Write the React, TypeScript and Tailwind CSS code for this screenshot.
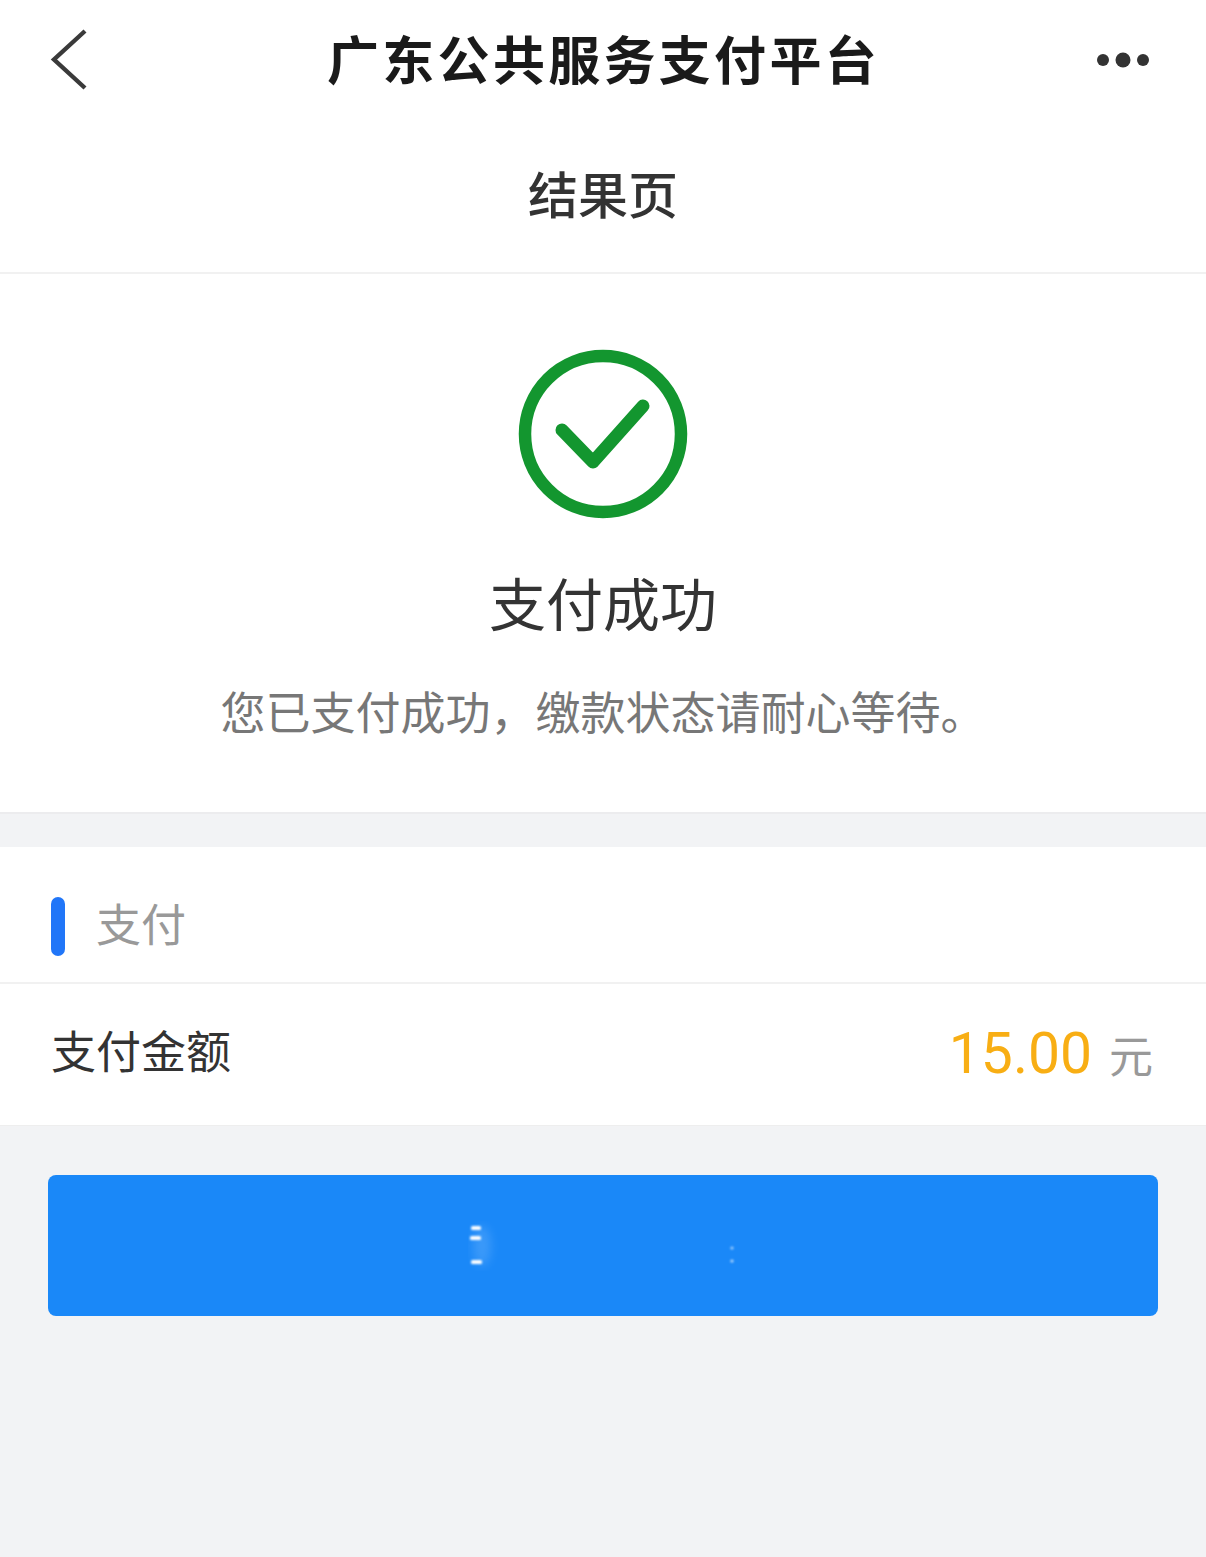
const cjk = "font-['Noto_Sans_CJK_SC','Noto_Sans',sans-serif]";

function BackIcon() {
  return (
    <svg width="40" height="62" viewBox="0 0 40 62" fill="none" className="text-[#3a3a3a]">
      <path d="M35 2 L4 30.5 L35 59" stroke="currentColor" strokeWidth="4.4" />
    </svg>
  );
}

function MoreIcon() {
  return (
    <svg width="54" height="16" viewBox="0 0 54 16" className="text-[#333]">
      <circle cx="7" cy="8" r="6" fill="currentColor" />
      <circle cx="27" cy="8" r="7.5" fill="currentColor" />
      <circle cx="47" cy="8" r="6" fill="currentColor" />
    </svg>
  );
}

function SuccessIcon() {
  return (
    <svg width="170" height="170" viewBox="0 0 170 170" fill="none" className="text-[#13962f]">
      <circle cx="85" cy="85" r="78" stroke="currentColor" strokeWidth="12.5" />
      <path
        d="M44 81 L75 113 L125 57"
        stroke="currentColor"
        strokeWidth="13"
        strokeLinecap="round"
        strokeLinejoin="round"
      />
    </svg>
  );
}

// the label on the button is smudged out in the picture, only a few marks remain
function ButtonSmudge() {
  return (
    <svg width="270" height="50" viewBox="0 0 270 50" fill="none">
      <defs>
        <filter id="smudge" x="-50%" y="-100%" width="200%" height="300%">
          <feGaussianBlur stdDeviation="0.9" />
        </filter>
        <filter id="smudge-wide" x="-50%" y="-50%" width="200%" height="200%">
          <feGaussianBlur stdDeviation="5" />
        </filter>
      </defs>
      <ellipse cx="14" cy="25" rx="9" ry="20" fill="#ffffff" opacity="0.14" filter="url(#smudge-wide)" />
      <rect x="3" y="5" width="10" height="4" rx="1.5" fill="#ffffff" filter="url(#smudge)" />
      <rect x="2" y="15" width="11" height="4" rx="1.5" fill="#ffffff" filter="url(#smudge)" />
      <rect x="3" y="39" width="11" height="4" rx="1.5" fill="#ffffff" filter="url(#smudge)" />
      <circle cx="264" cy="27" r="1.6" fill="#ffffff" opacity="0.6" filter="url(#smudge)" />
      <circle cx="264" cy="40" r="1.6" fill="#ffffff" opacity="0.7" filter="url(#smudge)" />
    </svg>
  );
}

export default function App() {
  return (
    <div className={`${cjk} flex h-[1557px] w-[1206px] flex-col overflow-hidden bg-[#f2f3f5]`}>
      <header className="h-[274px] border-b-2 border-[#f1f1f1] bg-white">
        <div className="flex h-[120px] items-center pl-[50px] pr-[56px]">
          <div className="flex-1">
            <BackIcon />
          </div>
          <h1 className="mb-[4px] ml-[7px] text-[52px] font-semibold leading-none tracking-[3.3px] text-[#1a1a1a]">
            广东公共服务支付平台
          </h1>
          <div className="flex flex-1 justify-end">
            <MoreIcon />
          </div>
        </div>
        <h2 className="mt-[36px] text-center text-[50px] font-medium leading-[72px] text-[#333]">结果页</h2>
      </header>

      <section className="flex h-[540px] flex-col items-center border-b-2 border-[#ececee] bg-white pt-[75px]">
        <SuccessIcon />
        <p className="mt-[42px] text-[57px] leading-[80px] text-[#333]">支付成功</p>
        <p className="mt-[38px] text-[45px] leading-[64px] text-[#777]">您已支付成功，缴款状态请耐心等待。</p>
      </section>

      <section className="mt-[33px] bg-white">
        <div className="flex h-[137px] items-center gap-[31px] border-b-2 border-[#f1f1f1] pl-[51px] pt-[24px]">
          <div className="h-[59px] w-[14px] rounded-full bg-[#2176f8]" />
          <span className="mb-[8px] text-[45px] leading-none text-[#999]">支付</span>
        </div>
        <div className="flex h-[142px] items-center justify-between border-b border-[#eeeeee] pl-[51px] pr-[53px]">
          <span className="mb-[10px] text-[45px] leading-none text-[#333]">支付金额</span>
          <span className="mb-[3px] flex items-baseline gap-[17px]">
            <span className="font-['Roboto',sans-serif] text-[57px] font-normal leading-none text-[#f8ae14]">15.00</span>
            <span className="text-[44px] leading-none text-[#999]">元</span>
          </span>
        </div>
      </section>

      <div className="px-[48px] pt-[49px]">
        <button className="flex h-[141px] w-full items-center rounded-[8px] bg-[#1a88f8] pl-[420px]">
          <ButtonSmudge />
        </button>
      </div>
    </div>
  );
}
